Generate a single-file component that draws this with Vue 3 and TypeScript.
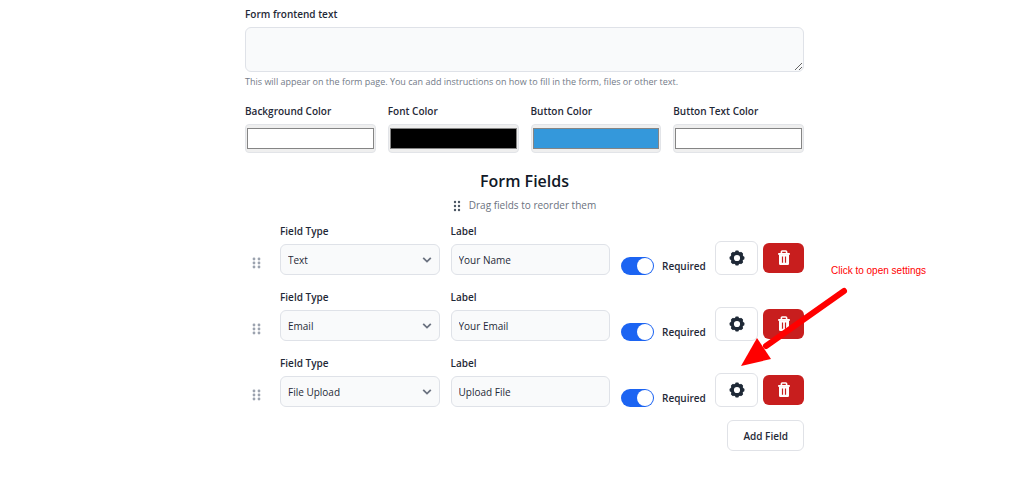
<script setup lang="ts">
import { reactive, ref } from 'vue'

interface ColorOption {
  id: string
  label: string
  value: string
}

interface FormField {
  id: number
  type: string
  label: string
  required: boolean
}

const frontendText = ref('')
const fieldTypes = ['Text', 'Email', 'File Upload']
const bumps = [0, 45, 90, 135, 180, 225, 270, 315]
const dots = [3, 7, 11]

const colors = reactive<ColorOption[]>([
  { id: 'background', label: 'Background Color', value: '#ffffff' },
  { id: 'font', label: 'Font Color', value: '#000000' },
  { id: 'button', label: 'Button Color', value: '#3498db' },
  { id: 'button-text', label: 'Button Text Color', value: '#ffffff' },
])

const fields = reactive<FormField[]>([
  { id: 1, type: 'Text', label: 'Your Name', required: true },
  { id: 2, type: 'Email', label: 'Your Email', required: true },
  { id: 3, type: 'File Upload', label: 'Upload File', required: true },
])

function addField() {
  const id = Math.max(0, ...fields.map((f) => f.id)) + 1
  fields.push({ id, type: 'Text', label: '', required: false })
}

function removeField(index: number) {
  fields.splice(index, 1)
}
</script>

<template>
  <main class="page">
    <form class="form" @submit.prevent>
      <label class="label" for="frontend-text">Form frontend text</label>
      <textarea id="frontend-text" v-model="frontendText" class="control textarea"></textarea>
      <p class="help">This will appear on the form page. You can add instructions on how to fill in the form, files or other text.</p>

      <div class="colors">
        <div v-for="color in colors" :key="color.id" class="group">
          <label class="label" :for="color.id">{{ color.label }}</label>
          <input :id="color.id" v-model="color.value" class="color" type="color" />
        </div>
      </div>

      <h2 class="title">Form Fields</h2>
      <p class="hint">
        <svg class="hint-dots" width="8" height="14" viewBox="0 0 8 14" aria-hidden="true">
          <template v-for="y in dots" :key="y">
            <circle cx="2" :cy="y + 1" r="1.2" />
            <circle cx="6" :cy="y + 1" r="1.2" />
          </template>
        </svg>
        <span>Drag fields to reorder them</span>
      </p>

      <section class="fields">
        <div v-for="(field, index) in fields" :key="field.id" class="row">
          <svg class="handle" width="10" height="14" viewBox="0 0 10 14" aria-hidden="true">
            <template v-for="y in dots" :key="y">
              <circle cx="3" :cy="y" r="1.4" />
              <circle cx="8" :cy="y" r="1.4" />
            </template>
          </svg>
          <div class="group">
            <label class="label" :for="`type-${field.id}`">Field Type</label>
            <div class="select-wrap">
              <select :id="`type-${field.id}`" v-model="field.type" class="control">
                <option v-for="type in fieldTypes" :key="type">{{ type }}</option>
              </select>
              <svg class="chevron" width="10" height="6" viewBox="0 0 10 6" aria-hidden="true">
                <path d="M1.2 .8 5 4.6 8.8 .8" />
              </svg>
            </div>
          </div>
          <div class="group">
            <label class="label" :for="`label-${field.id}`">Label</label>
            <input :id="`label-${field.id}`" v-model="field.label" class="control" type="text" />
          </div>
          <label class="required">
            <input v-model="field.required" class="toggle" type="checkbox" />
            <span>Required</span>
          </label>
          <button class="button settings" type="button" aria-label="Settings">
            <svg width="16" height="16" viewBox="0 0 16 16" aria-hidden="true">
              <circle cx="8" cy="8" r="4.8" fill="none" stroke="#1f2937" stroke-width="3.4" />
              <rect v-for="a in bumps" :key="a" x="6.2" y="0.6" width="3.6" height="2.6" rx="1" fill="#1f2937" :transform="`rotate(${a} 8 8)`" />
            </svg>
          </button>
          <button class="button delete" type="button" aria-label="Delete" @click="removeField(index)">
            <svg width="12" height="16" viewBox="0 0 12 16" aria-hidden="true">
              <path d="M3.4 3.2V1.8q0-.8.8-.8h3.6q.8 0 .8.8v1.4" fill="none" stroke="#fff" stroke-width="1.6" />
              <path d="M.2 3h11.6v1.9H.2z" fill="#fff" />
              <path fill-rule="evenodd" d="M1 4.5h10v9.3q0 1.2-1.2 1.2H2.2q-1.2 0-1.2-1.2zM3.9 6.5v6.2h1.2V6.5zM6.9 6.5v6.2h1.2V6.5z" fill="#fff" />
            </svg>
          </button>
        </div>

        <div class="callout">
          <span>Click to open settings</span>
          <svg width="110" height="84" viewBox="0 0 110 84" aria-hidden="true">
            <path d="M104 7 26 62" fill="none" stroke="#f00" stroke-width="6" stroke-linecap="round" />
            <path d="M1 82 17 54 31 75z" fill="#f00" />
          </svg>
        </div>
      </section>

      <div class="actions">
        <button class="button add" type="button" @click="addField">Add Field</button>
      </div>
    </form>
  </main>
</template>

<style>
body {
  margin: 0;
  background: #fff;
}
</style>

<style scoped>
* {
  box-sizing: border-box;
}

.page {
  padding: 6px 0 24px 25px;
  font-family: "Segoe UI", "Open Sans", "Noto Sans", sans-serif;
  font-size: 10px;
  line-height: 16px;
  color: #1f2937;
}

.form {
  max-width: 559px;
  margin: 0 auto;
}

.label {
  display: block;
  margin-bottom: 5px;
  font-weight: 600;
}

.control {
  display: block;
  width: 100%;
  height: 31px;
  margin: 0;
  padding: 0 7px;
  border: 1px solid #dfe2e8;
  border-radius: 6px;
  background: #f9fafb;
  color: #1f2937;
  font: inherit;
  appearance: none;
}

.textarea {
  height: 45px;
  padding: 6px 7px;
  resize: vertical;
}

.help {
  margin: 2px 0 13px;
  font-size: 9px;
  color: #737b88;
}

.colors {
  display: grid;
  grid-template-columns: repeat(4, 1fr);
  gap: 12px;
}

.color {
  display: block;
  width: 100%;
  height: 29px;
  padding: 3px 1px;
  border: 1px solid #e2e4e8;
  border-radius: 4px;
  background: #efefef;
  appearance: none;
}

.color::-webkit-color-swatch-wrapper {
  padding: 0;
}

.color::-webkit-color-swatch {
  border: 1px solid #858585;
  border-radius: 0;
}

.title {
  margin: 16px 0 0;
  font-size: 16px;
  font-weight: 600;
  line-height: 24px;
  text-align: center;
  color: #111827;
}

.hint {
  display: flex;
  justify-content: center;
  align-items: center;
  gap: 8px;
  margin: 4px 0 10px;
  color: #6b7280;
}

.hint-dots {
  fill: #4b5563;
}

.fields {
  position: relative;
  display: grid;
  gap: 14px;
}

.row {
  display: grid;
  grid-template-columns: 24px 1fr 1fr 93px 55px 46px;
  align-items: end;
}

.row .group {
  margin-left: 11px;
}

.handle {
  margin: 0 0 5px 6px;
  fill: #9ca3af;
}

.select-wrap {
  position: relative;
}

.chevron {
  position: absolute;
  right: 8px;
  top: 13px;
  fill: none;
  stroke: #6b7280;
  stroke-width: 1.8;
  pointer-events: none;
}

.required {
  display: flex;
  align-items: center;
  gap: 8px;
  margin-left: 11px;
  font-weight: 600;
}

.toggle {
  display: flex;
  flex: none;
  align-items: center;
  justify-content: flex-end;
  width: 33px;
  height: 18px;
  margin: 0;
  padding: 1px;
  border-radius: 9px;
  background: #d1d5db;
  appearance: none;
}

.toggle::before {
  content: "";
  width: 16px;
  height: 16px;
  margin-right: auto;
  border-radius: 50%;
  background: #fff;
}

.toggle:checked {
  background: #1c64f2;
}

.toggle:checked::before {
  margin-right: 0;
}

.button {
  display: flex;
  align-items: center;
  justify-content: center;
  padding: 0;
  border: 1px solid #e0e2e7;
  border-radius: 6px;
  background: #fff;
  color: #1f2937;
  font: inherit;
  font-weight: 600;
  cursor: pointer;
}

.settings {
  height: 34px;
  margin-left: 12px;
}

.delete {
  height: 30px;
  margin: 0 0 2px 5px;
  border: 0;
  background: #c81e1e;
}

.actions {
  display: flex;
  justify-content: flex-end;
  margin-top: 13px;
}

.add {
  height: 31px;
  padding: 0 15px;
}

.callout {
  position: absolute;
  left: 495px;
  top: 40px;
  color: #f00;
  font-family: "Liberation Sans", Arial, sans-serif;
  line-height: 16px;
  white-space: nowrap;
  pointer-events: none;
}

.callout span {
  display: block;
  margin-left: 91px;
}

.callout svg {
  display: block;
  margin-top: 5px;
}
</style>
